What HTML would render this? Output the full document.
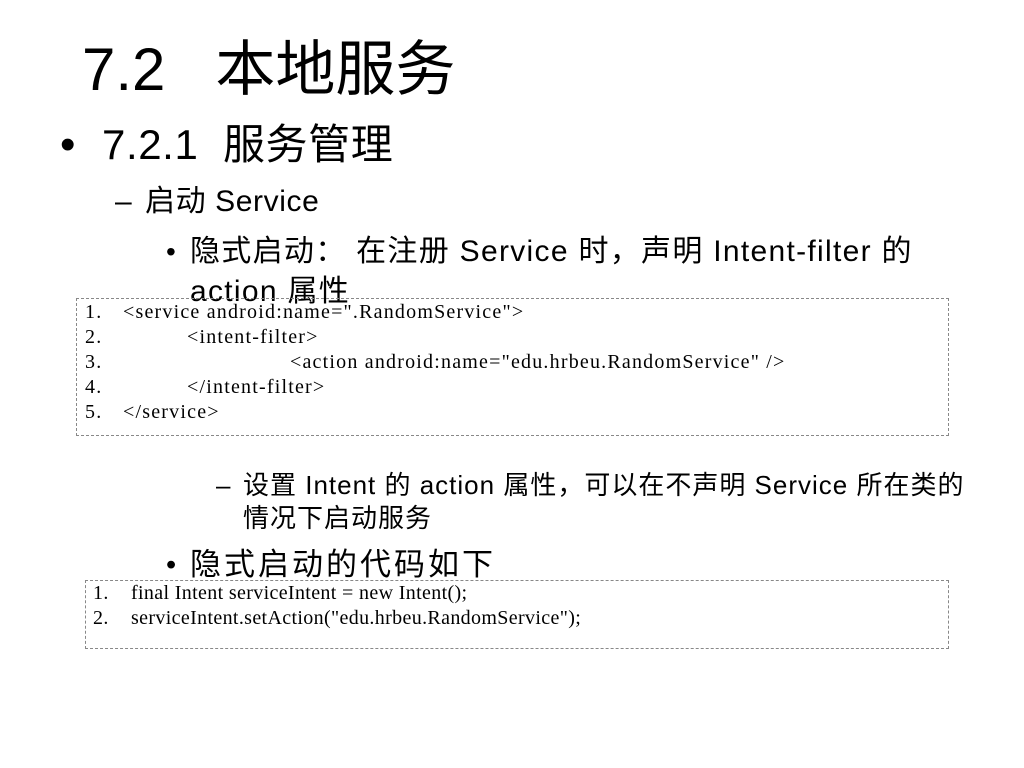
<!DOCTYPE html>
<html><head><meta charset="utf-8"><style>
body{margin:0;width:1024px;height:768px;background:#fff;position:relative;overflow:hidden;color:#000}
.t{position:absolute;white-space:nowrap;font-family:"Liberation Sans","Noto Sans CJK SC",sans-serif}
.c{position:absolute;white-space:nowrap;font-family:"Liberation Serif","Noto Serif CJK SC",serif;font-size:20px;line-height:25px;letter-spacing:1.2px}
.c2{letter-spacing:0.35px}
.box{position:absolute;border:1px dashed #888}
</style></head><body>
<div class="t" style="left:82px;top:40px;font-size:60px;line-height:60px">7.2&nbsp;&nbsp; 本地服务</div>
<div class="t" style="left:60px;top:123px;font-size:44px;line-height:44px">•</div>
<div class="t" style="left:102px;top:123px;font-size:42px;line-height:44px;letter-spacing:0.6px">7.2.1&nbsp; 服务管理</div>
<div class="t" style="left:115px;top:186px;font-size:30px;line-height:32px">–</div>
<div class="t" style="left:145px;top:186px;font-size:30px;line-height:32px;letter-spacing:0.6px">启动 Service</div>
<div class="t" style="left:166px;top:237px;font-size:28px;line-height:30px">•</div>
<div class="t" style="left:190px;top:237px;font-size:30px;line-height:30px;letter-spacing:1.3px">隐式启动：&nbsp;在注册 Service 时，声明 Intent-filter 的</div>
<div class="t" style="left:190px;top:277px;font-size:30px;line-height:30px;letter-spacing:1.3px">action 属性</div>
<div class="box" style="left:76px;top:298px;width:871px;height:136px"></div>
<div class="c" style="left:85px;top:300px">1.</div><div class="c" style="left:123px;top:300px">&lt;service android:name=".RandomService"&gt;</div>
<div class="c" style="left:85px;top:325px">2.</div><div class="c" style="left:187px;top:325px">&lt;intent-filter&gt;</div>
<div class="c" style="left:85px;top:350px">3.</div><div class="c" style="left:290px;top:350px">&lt;action android:name="edu.hrbeu.RandomService" /&gt;</div>
<div class="c" style="left:85px;top:375px">4.</div><div class="c" style="left:187px;top:375px">&lt;/intent-filter&gt;</div>
<div class="c" style="left:85px;top:400px">5.</div><div class="c" style="left:123px;top:400px">&lt;/service&gt;</div>
<div class="t" style="left:216px;top:472px;font-size:26px;line-height:26px">–</div>
<div class="t" style="left:243px;top:472px;font-size:26px;line-height:26px;letter-spacing:1px">设置 Intent 的 action 属性，可以在不声明 Service 所在类的</div>
<div class="t" style="left:243px;top:505px;font-size:26px;line-height:26px;letter-spacing:1px">情况下启动服务</div>
<div class="t" style="left:166px;top:550px;font-size:29px;line-height:30px">•</div>
<div class="t" style="left:190px;top:550px;font-size:31px;line-height:30px;letter-spacing:3px">隐式启动的代码如下</div>
<div class="box" style="left:85px;top:580px;width:862px;height:67px"></div>
<div class="c c2" style="left:93px;top:581px">1.</div><div class="c c2" style="left:131px;top:581px">final Intent serviceIntent = new Intent();</div>
<div class="c c2" style="left:93px;top:606px">2.</div><div class="c c2" style="left:131px;top:606px">serviceIntent.setAction("edu.hrbeu.RandomService");</div>
</body></html>
